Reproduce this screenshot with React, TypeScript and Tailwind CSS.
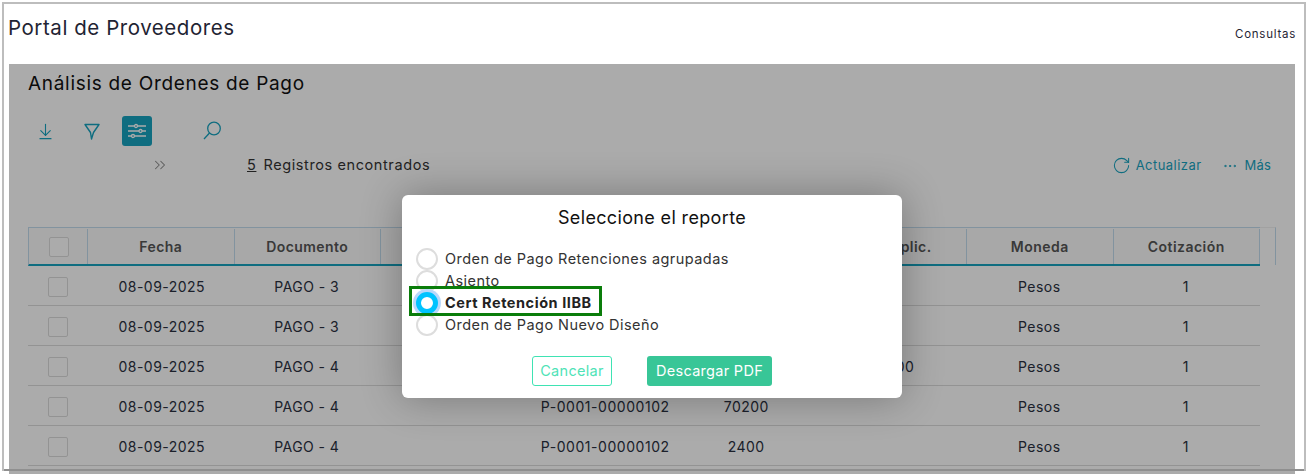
import { ArrowDownToLine, ChevronsRight, Ellipsis, RotateCw } from 'lucide-react'

// rows 1-3 sit behind the dialog, only the visible cells are filled
const rows = [
  { doc: 'PAGO - 3', comp: '', imp: '', aplic: '' },
  { doc: 'PAGO - 3', comp: '', imp: '', aplic: '' },
  { doc: 'PAGO - 4', comp: '', imp: '', aplic: '61800' },
  { doc: 'PAGO - 4', comp: 'P-0001-00000102', imp: '70200', aplic: '' },
  { doc: 'PAGO - 4', comp: 'P-0001-00000102', imp: '2400', aplic: '' },
]

const options = ['Orden de Pago Retenciones agrupadas', 'Asiento', 'Cert Retención IIBB', 'Orden de Pago Nuevo Diseño']

function Check() {
  return <div className="w-5 h-5 rounded-[2px] border border-[#dcdcdc] bg-white" />
}

export default function App() {
  return (
    <div className="w-[1309px] h-[474px] overflow-hidden bg-white text-[#1f2433]" style={{ fontFamily: 'Inter, "Open Sans", sans-serif' }}>
      <div className="relative ml-[2px] mt-[2px] w-[1304px] h-[469px] border-2 border-[#bdbdbd]">
        {/* Top bar */}
        <div className="flex justify-between h-[60px] pl-1 pr-[8px]">
          <h1 className="text-[20.5px] tracking-[0.55px] mt-[10px] leading-7">Portal de Proveedores</h1>
          <a className="text-[11.5px] tracking-[0.75px] mt-[22px] leading-4">Consultas</a>
        </div>

        {/* Panel */}
        <div className="relative ml-[5px] w-[1286px] h-[410px] bg-white overflow-hidden">
          <div className="pl-[19px]">
            <h2 className="text-[19px] tracking-[0.7px] text-[#111] pt-[6px] leading-7">Análisis de Ordenes de Pago</h2>

            <div className="flex items-center h-[30px] mt-[18px] text-[#17a3bf]">
              <ArrowDownToLine size={19} strokeWidth={1.4} className="ml-[8px]" />
              <svg width="20" height="20" viewBox="0 0 20 20" fill="none" stroke="currentColor" strokeWidth="1.4" className="ml-[27px]">
                <path d="M3 3.5h14L11.5 11.5 9.5 18 8.5 11.5z" strokeLinejoin="round" />
              </svg>
              <div className="ml-[20px] w-[30px] h-[30px] rounded-[3px] bg-[#17a3bf] flex items-center justify-center">
                <svg width="20" height="18" viewBox="0 0 20 18" fill="none" stroke="white" strokeWidth="1.3">
                  <path d="M1 4h6.5M10.5 4H19M1 9h11M15 9h4M1 14h3.5M7.5 14H19" />
                  <circle cx="9" cy="4" r="1.5" />
                  <circle cx="13.5" cy="9" r="1.5" />
                  <circle cx="6" cy="14" r="1.5" />
                </svg>
              </div>
              <svg width="20" height="20" viewBox="0 0 20 20" fill="none" stroke="currentColor" strokeWidth="1.3" className="ml-[50px]">
                <circle cx="12" cy="7.5" r="6.3" />
                <path d="M7.5 12L2 18" />
              </svg>
            </div>

            <div className="flex items-center h-[24px] mt-[7px] text-[14.5px] tracking-[0.6px] text-[#333]">
              <ChevronsRight size={18} strokeWidth={1.4} className="ml-[123px] text-[#8a8a8a]" />
              <span className="ml-[78px] underline">5</span>
              <span className="ml-[7px]">Registros encontrados</span>
              <div className="ml-auto mr-[24px] mt-[1px] flex items-center text-[#17a3bf] text-[13px]">
                <RotateCw size={19} strokeWidth={1.3} />
                <span className="ml-[5px] tracking-[0.45px]">Actualizar</span>
                <Ellipsis size={16} strokeWidth={1.5} className="ml-[21px]" />
                <span className="ml-[6px] tracking-[0.2px]">Más</span>
              </div>
            </div>

            {/* Table */}
            <div className="mt-[50px] flex items-start">
              <div className="w-[1232px]">
                <div className="grid grid-cols-[59px_repeat(8,146.5px)] h-[39px] pt-[1px] border-t border-l border-[#c2dcee] border-b-2 border-b-[#17a3bf] bg-[#fbfbfb] text-[14px] font-semibold tracking-[0.45px] text-[#555]">
                  <div className="flex items-center justify-center pl-[1px] border-r border-[#c2dcee]"><Check /></div>
                  {['Fecha', 'Documento', '', '', '', 'Imp. Aplic.', 'Moneda', 'Cotización'].map((h, i) => (
                    <div key={i} className="flex items-center justify-center border-r border-[#c2dcee]">{h}</div>
                  ))}
                </div>
                {rows.map((r, i) => (
                  <div key={i} className="grid grid-cols-[59px_repeat(8,146.5px)] h-[40px] pt-[2px] border-b border-[#dcdcdc] text-[14px] tracking-[0.45px] text-[#2a3040] text-center items-center">
                    <div className="flex justify-center pl-[1px]"><Check /></div>
                    <div className="pl-[3px]">08-09-2025</div>
                    <div>{r.doc}</div>
                    <div />
                    <div className="pl-[11px] tracking-[0.55px]">{r.comp}</div>
                    <div>{r.imp}</div>
                    <div>{r.aplic}</div>
                    <div>Pesos</div>
                    <div>1</div>
                  </div>
                ))}
              </div>
              <div className="w-[16px] h-[38px] border-r border-t border-[#c2dcee] border-t-[#f0f0f0]" />
            </div>
          </div>

          {/* Dim layer */}
          <div className="absolute inset-0 bg-black/33" />

          {/* Report dialog */}
          <div className="absolute left-[393px] top-[131px] w-[500px] h-[203px] bg-white rounded-[6px] shadow-[0_0_40px_rgba(0,0,0,0.3)]">
            <h3 className="mt-[10px] text-center text-[18px] leading-[26px] tracking-[0.35px] text-[#111]">Seleccione el reporte</h3>
            <div className="relative mt-[17px] ml-[14px]">
              {options.map((o, i) => (
                <div key={o} className="flex items-center h-[22px] text-[14.5px] tracking-[0.45px] text-[#333]">
                  {i === 2 ? (
                    <span className="w-[22px] h-[22px] shrink-0 rounded-full border-[5px] border-[#00c3ff] bg-white shadow-[0_0_0_3px_#b9d8fb]" />
                  ) : (
                    <span className="w-[22px] h-[22px] shrink-0 rounded-full border-2 border-[#dddddd] bg-white" />
                  )}
                  <span className={i === 2 ? 'ml-[7px] font-bold tracking-[0.55px] text-[#222]' : 'ml-[7px]'}>{o}</span>
                </div>
              ))}
              <div className="absolute left-[-7px] top-[38px] w-[193px] h-[30px] border-[3px] border-[#0a7d0a]" />
            </div>
            <div className="flex mt-[20px] ml-[130px]">
              <button className="w-[80px] h-[30px] rounded-[3px] border border-[#3fe3b3] text-[14.5px] tracking-[0.3px] text-[#4fe3b7]">Cancelar</button>
              <button className="ml-[35px] w-[125px] h-[30px] rounded-[3px] bg-[#38c697] text-[14.5px] tracking-[0.3px] text-white">Descargar PDF</button>
            </div>
          </div>
        </div>

        {/* bottom frame line runs over the panel */}
        <div className="absolute left-0 right-0 bottom-[-2px] h-[2px] bg-[#8f8f8f]" />
      </div>
    </div>
  )
}
